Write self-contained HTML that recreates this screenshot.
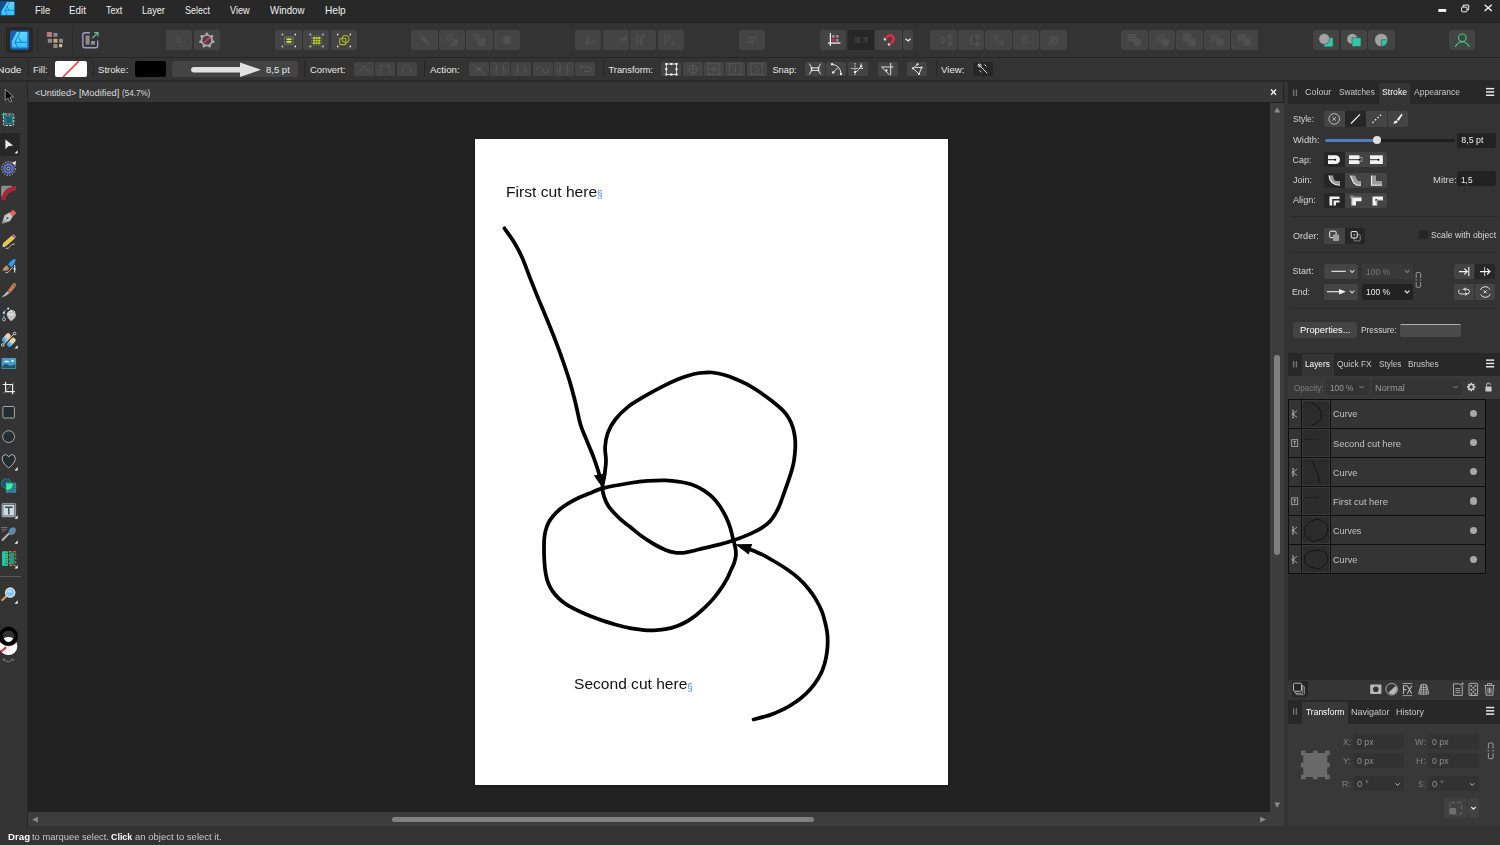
<!DOCTYPE html>
<html lang="en"><head><meta charset="utf-8"><title>Affinity Designer</title>
<style>
html,body{margin:0;padding:0;}
body{width:1500px;height:845px;overflow:hidden;background:#222222;position:relative;
 font-family:"Liberation Sans",sans-serif;}
.t{position:absolute;white-space:nowrap;transform-origin:0 50%;}
.b{position:absolute;border-radius:2px;background:#444444;}
.b.off{background:#444444;}
.b.on{background:#262626;}
svg{position:absolute;left:0;top:0;overflow:visible;}
</style></head>
<body>
<div id="document">
<div style="position:absolute;left:28.20px;top:82.00px;width:1254.80px;height:20.00px;background:#363636;"></div>
<span class="t" style="left:35.15px;top:86.00px;font-size:8.9px;line-height:14px;color:#dcdcdc;transform:scaleX(1.0179);">&lt;Untitled&gt;</span>
<span class="t" style="left:78.85px;top:86.00px;font-size:8.9px;line-height:14px;color:#dcdcdc;transform:scaleX(1.0474);">[Modified]</span>
<span class="t" style="left:122.21px;top:86.00px;font-size:8.9px;line-height:14px;color:#dcdcdc;transform:scaleX(0.9101);">(54.7%)</span>
<div style="position:absolute;left:1269.80px;top:102.50px;width:14.20px;height:723.50px;background:#3d3d3d;"></div>
<div style="position:absolute;left:28.00px;top:812.00px;width:1256.00px;height:14.00px;background:#3d3d3d;"></div>
<div style="position:absolute;left:1274.00px;top:354.80px;width:6.10px;height:200.20px;background:#808080;border-radius:3px;"></div>
<div style="position:absolute;left:392.00px;top:816.50px;width:422.00px;height:5.70px;background:#808080;border-radius:3px;"></div>
<div style="position:absolute;left:1284.00px;top:82.00px;width:4.00px;height:744.00px;background:#333333;"></div>
<div class="artboard" style="position:absolute;left:475.00px;top:139.00px;width:473.00px;height:645.50px;background:#ffffff;box-shadow:0 0 2px 0.5px rgba(0,0,0,0.35);"></div>
<span class="t" style="left:505.75px;top:181.70px;font-size:15.3px;line-height:20px;color:#111;transform:scaleX(1.0212);will-change:transform;">First cut here</span>
<span class="t" style="left:573.50px;top:674.20px;font-size:15.3px;line-height:20px;color:#111;transform:scaleX(1.0174);will-change:transform;">Second cut here</span>
<span class="t" style="left:596.53px;top:189.10px;font-size:10px;line-height:12px;color:#4f93e6;transform:scaleX(1.0335);will-change:transform;">§</span>
<span class="t" style="left:686.53px;top:681.60px;font-size:10px;line-height:12px;color:#4f93e6;transform:scaleX(1.0335);will-change:transform;">§</span>
<svg width="1500" height="845" viewBox="0 0 1500 845">
<g fill="none" stroke="#000" stroke-width="3.75" stroke-linecap="round" stroke-linejoin="round">
<path d="M602.4,488.4C609.2,486.6 622.4,484.2 630.0,483.0C637.6,481.8 641.9,481.3 647.8,480.9C653.7,480.5 660.2,480.2 665.5,480.4C670.8,480.5 675.3,481.1 679.7,481.8C684.1,482.5 687.8,483.0 691.8,484.4C695.8,485.8 700.2,488.1 703.7,490.3C707.2,492.6 710.4,495.1 713.1,497.9C715.9,500.6 718.0,503.6 720.2,506.8C722.4,510.1 724.5,513.9 726.2,517.4C727.9,520.9 729.2,524.5 730.3,528.0C731.4,531.5 732.1,535.2 733.0,538.6C733.9,542.0 734.9,545.3 735.4,548.1C735.9,550.9 736.1,552.8 735.9,555.2C735.7,557.7 735.1,560.2 734.2,562.8C733.3,565.4 731.8,568.1 730.6,570.8C729.4,573.5 728.6,576.0 727.0,578.9C725.4,581.8 723.3,585.2 721.1,588.4C718.9,591.6 716.6,594.8 714.0,597.9C711.4,601.0 708.7,603.9 705.7,606.7C702.8,609.6 699.4,612.5 696.3,615.0C693.1,617.5 690.0,619.7 686.8,621.5C683.6,623.3 680.8,624.7 677.3,626.0C673.8,627.3 669.4,628.5 665.5,629.2C661.6,629.9 657.7,630.3 653.7,630.4C649.8,630.5 645.8,630.2 641.8,629.8C637.8,629.4 634.4,629.1 630.0,628.2C625.6,627.3 619.6,625.7 615.2,624.5C610.8,623.3 607.4,622.2 603.4,620.9C599.4,619.6 595.5,618.2 591.5,616.6C587.5,615.0 583.4,613.2 579.7,611.5C576.0,609.8 572.2,608.0 569.1,606.2C566.0,604.4 563.8,602.8 561.4,600.8C559.0,598.8 556.8,596.6 554.9,594.3C553.0,592.0 551.4,589.8 550.1,587.2C548.8,584.6 547.7,581.9 546.9,578.9C546.1,575.9 545.5,572.6 545.1,569.5C544.7,566.4 544.5,563.4 544.3,560.0C544.1,556.6 544.0,552.6 544.0,549.2C544.0,545.8 544.0,542.7 544.2,539.7C544.4,536.7 544.7,534.2 545.4,531.4C546.1,528.6 547.0,525.7 548.3,523.1C549.6,520.5 551.2,518.3 553.1,516.0C555.0,513.7 557.1,511.6 559.6,509.5C562.1,507.4 565.0,505.4 567.9,503.6C570.8,501.8 573.8,500.2 577.3,498.5C580.8,496.8 585.0,495.3 589.2,493.6C593.4,491.9 595.6,490.2 602.4,488.4Z"/>
<path d="M602.4,487.3C602.5,483.7 603.9,479.3 604.5,474.9C605.1,470.5 605.9,465.6 606.0,461.0C606.1,456.4 604.8,451.7 605.1,447.0C605.4,442.3 606.1,437.4 607.8,432.8C609.5,428.2 612.0,423.8 615.3,419.5C618.6,415.2 622.9,411.0 627.7,407.1C632.5,403.2 638.8,399.7 644.3,396.4C649.8,393.1 655.3,390.1 660.8,387.3C666.3,384.5 672.6,381.6 677.4,379.6C682.2,377.6 685.7,376.3 689.5,375.2C693.3,374.1 696.3,373.4 700.0,373.0C703.7,372.6 707.8,372.2 711.8,372.5C715.8,372.8 719.8,373.7 723.7,374.8C727.7,375.9 731.6,377.3 735.5,378.9C739.4,380.5 743.3,382.2 747.3,384.4C751.2,386.5 755.2,389.1 759.2,391.8C763.2,394.5 767.1,397.2 771.0,400.3C774.9,403.4 779.8,407.4 782.8,410.4C785.8,413.4 787.1,415.2 788.8,418.1C790.5,421.0 791.9,424.2 792.9,427.5C793.9,430.8 794.6,434.8 795.0,438.1C795.4,441.5 795.4,444.0 795.3,447.6C795.1,451.2 794.6,456.6 794.1,460.0C793.6,463.4 793.3,464.6 792.4,468.0C791.5,471.4 790.0,476.0 788.6,480.2C787.2,484.4 785.5,488.9 783.9,493.3C782.3,497.7 780.8,502.6 779.2,506.3C777.6,510.0 776.1,512.6 774.5,515.2C772.9,517.8 771.9,519.5 769.7,521.7C767.5,523.9 764.5,526.2 761.4,528.2C758.2,530.2 755.4,531.6 750.8,533.6C746.2,535.6 739.1,538.5 733.8,540.3C728.5,542.1 724.1,543.3 719.1,544.6C714.1,545.9 708.6,546.9 703.7,548.1C698.9,549.3 693.4,550.8 690.0,551.6C686.6,552.4 685.8,552.6 683.3,552.8C680.8,553.0 678.0,553.1 675.0,552.6C672.0,552.1 669.0,551.3 665.5,549.9C662.0,548.5 657.7,546.3 653.7,544.0C649.8,541.7 645.8,539.2 641.8,536.3C637.8,533.4 633.7,529.8 630.0,526.8C626.3,523.8 623.4,522.0 619.8,518.6C616.2,515.2 611.2,510.0 608.6,506.3C606.0,502.6 605.0,499.6 604.0,496.4C603.0,493.2 602.3,490.9 602.4,487.3Z"/>
<path d="M504.4,228.3C506.0,230.6 511.2,237.5 514.1,242.3C517.0,247.1 519.4,251.5 522.0,257.3C524.6,263.1 527.0,270.3 529.7,277.1C532.4,283.9 535.2,291.1 538.0,297.9C540.8,304.7 543.5,310.9 546.3,317.7C549.1,324.4 551.8,331.1 554.6,338.4C557.4,345.7 560.6,354.3 563.1,361.5C565.6,368.7 567.6,374.5 569.7,381.4C571.8,388.3 573.7,395.8 575.5,403.0C577.3,410.2 578.7,418.4 580.5,424.5C582.3,430.6 584.1,433.9 586.3,439.4C588.5,444.9 591.6,452.1 593.7,457.6C595.8,463.1 597.7,469.5 598.7,472.6C599.7,475.8 599.5,475.9 599.6,476.5"/>
<path d="M753.6,719.5C756.3,718.8 764.6,716.8 769.6,715.1C774.6,713.4 779.5,711.4 783.8,709.2C788.1,707.0 791.9,704.8 795.6,702.1C799.4,699.5 803.1,696.3 806.3,693.3C809.5,690.2 812.2,687.0 814.6,683.8C817.0,680.6 818.8,677.6 820.5,674.3C822.2,670.9 823.5,667.5 824.6,663.7C825.7,660.0 826.5,655.6 827.0,651.8C827.5,648.0 827.7,644.3 827.7,641.0C827.7,637.7 827.5,635.0 827.1,632.0C826.7,629.0 826.1,626.2 825.2,622.7C824.3,619.2 823.3,614.8 821.7,610.9C820.1,607.0 817.9,602.8 815.7,599.1C813.5,595.5 811.4,592.4 808.6,589.0C805.9,585.6 802.8,582.1 799.2,578.9C795.7,575.6 791.8,572.6 787.3,569.5C782.8,566.4 776.1,562.4 772.0,560.0C767.9,557.6 766.4,556.7 762.8,554.9C759.2,553.1 752.9,550.5 750.3,549.4C747.7,548.3 747.5,548.4 747.0,548.2"/>
</g>
<polygon points="602.9,488.4 593.9,475.5 606.6,472.9" fill="#000"/>
<polygon points="735.1,544.3 752.2,544.1 748.7,554.4" fill="#000"/>
<circle cx="538.5" cy="194" r="0.6" fill="#6aa5ea"/>
<circle cx="563.5" cy="194" r="0.6" fill="#6aa5ea"/>
<circle cx="628.7" cy="686.6" r="0.6" fill="#6aa5ea"/>
<circle cx="653.2" cy="686.6" r="0.6" fill="#6aa5ea"/>
<g fill="#8c8c8c"><polygon points="1274.3,112.6 1280.2,112.6 1277.2,107.2"/><polygon points="1274.3,802.4 1280.2,802.4 1277.2,807.8"/><polygon points="1260.2,816.8 1260.2,822.4 1265.8,819.6"/><polygon points="37.8,816.8 37.8,822.4 32.2,819.6"/></g>
<path d="M1271,89.5l5,5.3M1276,89.5l-5,5.3" stroke="#f0f0f0" stroke-width="1.3" fill="none"/>
</svg>
</div>
<div id="menubar">
<div style="position:absolute;left:0.00px;top:0.00px;width:1500.00px;height:22.00px;background:#282828;"></div>
<div style="position:absolute;left:0.00px;top:22.00px;width:1500.00px;height:1.00px;background:#252525;"></div>
<span class="t" style="left:34.75px;top:4.00px;font-size:10.4px;line-height:14px;color:#f0f0f0;transform:scaleX(0.9070);">File</span>
<span class="t" style="left:69.22px;top:4.00px;font-size:10.4px;line-height:14px;color:#f0f0f0;transform:scaleX(0.9418);">Edit</span>
<span class="t" style="left:105.82px;top:4.00px;font-size:10.4px;line-height:14px;color:#f0f0f0;transform:scaleX(0.8528);">Text</span>
<span class="t" style="left:142.27px;top:4.00px;font-size:10.4px;line-height:14px;color:#f0f0f0;transform:scaleX(0.8801);">Layer</span>
<span class="t" style="left:185.10px;top:4.00px;font-size:10.4px;line-height:14px;color:#f0f0f0;transform:scaleX(0.8650);">Select</span>
<span class="t" style="left:230.45px;top:4.00px;font-size:10.4px;line-height:14px;color:#f0f0f0;transform:scaleX(0.8746);">View</span>
<span class="t" style="left:270.45px;top:4.00px;font-size:10.4px;line-height:14px;color:#f0f0f0;transform:scaleX(0.9337);">Window</span>
<span class="t" style="left:324.69px;top:4.00px;font-size:10.4px;line-height:14px;color:#f0f0f0;transform:scaleX(0.9697);">Help</span>
<svg width="1500" height="845" viewBox="0 0 1500 845"><defs><linearGradient id="lgm" x1="0" y1="0" x2="0" y2="1"><stop offset="0" stop-color="#5ed9fb"/><stop offset="1" stop-color="#36c2fd"/></linearGradient></defs><rect x="-1" y="0.95" width="16.1" height="15.15" rx="1.7" fill="#154f8e"/><polygon points="7.1,2.1 14.2,2.1 14.2,14.9 1.3,14.9 1.3,11.4" fill="url(#lgm)"/><path d="M9.6,2.1 L5,10.4 L7.2,14.9 M5,10.4 H14.2 M6.9,6.5 L9.2,10.4" stroke="#1b74c8" stroke-width="0.75" fill="none" stroke-linejoin="round"/><rect x="1438.3" y="9" width="7.9" height="2.9" fill="#f4f4f4"/><g fill="none" stroke="#f0f0f0" stroke-width="1"><path d="M1463.3,7 v-1.9 h5.4 v4.6 h-1.8"/><rect x="1461.6" y="7.1" width="5.4" height="4.7" rx="0.8"/></g><path d="M1484.6,4.8 l7.2,6.2 M1491.8,4.8 l-7.2,6.2" stroke="#f4f4f4" stroke-width="1.3" fill="none"/></svg>
</div>
<div id="toolbar">
<div style="position:absolute;left:0.00px;top:23.00px;width:1500.00px;height:34.00px;background:#333333;"></div>
<div style="position:absolute;left:0.00px;top:57.00px;width:1500.00px;height:1.00px;background:#272727;"></div>
<div style="position:absolute;left:6.40px;top:27.00px;width:26.30px;height:26.00px;background:#272727;border-radius:2.5px;"></div>
<div style="position:absolute;left:37.00px;top:27.00px;width:1.00px;height:26.00px;background:#2a2a2a;"></div>
<div style="position:absolute;left:72.00px;top:27.00px;width:1.00px;height:26.00px;background:#2a2a2a;"></div>
<div class="b off" style="left:166.2px;top:30px;width:26.3px;height:20.3px"></div>
<div class="b " style="left:193.8px;top:30px;width:26.3px;height:20.3px"></div>
<div class="b " style="left:275.3px;top:30px;width:26.3px;height:20.3px"></div>
<div class="b " style="left:303.0px;top:30px;width:26.3px;height:20.3px"></div>
<div class="b " style="left:330.5px;top:30px;width:26.3px;height:20.3px"></div>
<div class="b off" style="left:411.3px;top:30px;width:26.3px;height:20.3px"></div>
<div class="b off" style="left:439.2px;top:30px;width:26.3px;height:20.3px"></div>
<div class="b off" style="left:466.3px;top:30px;width:26.3px;height:20.3px"></div>
<div class="b off" style="left:494.2px;top:30px;width:26.3px;height:20.3px"></div>
<div class="b off" style="left:575.0px;top:30px;width:26.3px;height:20.3px"></div>
<div class="b off" style="left:602.5px;top:30px;width:26.3px;height:20.3px"></div>
<div class="b off" style="left:630.0px;top:30px;width:26.3px;height:20.3px"></div>
<div class="b off" style="left:657.5px;top:30px;width:26.3px;height:20.3px"></div>
<div class="b off" style="left:739.2px;top:30px;width:26.3px;height:20.3px"></div>
<div class="b " style="left:820.0px;top:30px;width:26.3px;height:20.3px"></div>
<div class="b on" style="left:847.8px;top:30px;width:26.3px;height:20.3px"></div>
<div class="b " style="left:875.3px;top:30px;width:26.3px;height:20.3px"></div>
<div class="b" style="left:903px;top:30px;width:10px;height:20.3px"></div>
<div class="b off" style="left:930.3px;top:30px;width:26.3px;height:20.3px"></div>
<div class="b off" style="left:958.0px;top:30px;width:26.3px;height:20.3px"></div>
<div class="b off" style="left:985.3px;top:30px;width:26.3px;height:20.3px"></div>
<div class="b off" style="left:1013.0px;top:30px;width:26.3px;height:20.3px"></div>
<div class="b off" style="left:1040.3px;top:30px;width:26.3px;height:20.3px"></div>
<div class="b off" style="left:1121.3px;top:30px;width:26.3px;height:20.3px"></div>
<div class="b off" style="left:1149.2px;top:30px;width:26.3px;height:20.3px"></div>
<div class="b off" style="left:1176.3px;top:30px;width:26.3px;height:20.3px"></div>
<div class="b off" style="left:1204.2px;top:30px;width:26.3px;height:20.3px"></div>
<div class="b off" style="left:1231.3px;top:30px;width:26.3px;height:20.3px"></div>
<div class="b " style="left:1313.0px;top:30px;width:26.3px;height:20.3px"></div>
<div class="b " style="left:1340.8px;top:30px;width:26.3px;height:20.3px"></div>
<div class="b " style="left:1368.3px;top:30px;width:26.3px;height:20.3px"></div>
<div class="b " style="left:1449.2px;top:30px;width:26.3px;height:20.3px"></div>
<svg width="1500" height="845" viewBox="0 0 1500 845"><defs><linearGradient id="lgt" x1="0" y1="0" x2="0" y2="1"><stop offset="0" stop-color="#5ed9fb"/><stop offset="1" stop-color="#36c2fd"/></linearGradient></defs><rect x="10.10" y="30.60" width="19.10" height="19.10" rx="2.20" fill="#1a62b1"/><polygon points="16.59,31.99 27.29,31.99 27.29,47.60 11.90,47.60 11.90,41.20" fill="url(#lgt)"/><path d="M20.20,31.99 L14.89,42.19 L17.61,47.60 M14.89,42.29 L27.29,42.29 M18.60,37.29 L21.60,42.19" stroke="#1b78cf" stroke-width="0.96" fill="none" stroke-linejoin="round"/><rect x="46.8" y="32" width="5.2" height="4.9" rx="0.5" fill="#b07a82"/><rect x="53.4" y="33" width="4.1" height="3.7" rx="0.5" fill="#8c8c8c"/><rect x="47.8" y="38.8" width="4.2" height="3.9" rx="0.5" fill="#8c8c8c"/><rect x="53.4" y="38.8" width="4.1" height="3.9" rx="0.5" fill="#c9a27a"/><rect x="59" y="38.8" width="4.0" height="3.9" rx="0.5" fill="#8c8c8c"/><rect x="53.4" y="44" width="4.1" height="3.9" rx="0.5" fill="#8c8c8c"/><rect x="59" y="44" width="3.2" height="3.2" rx="0.5" fill="#d6c083"/><path d="M90,32.8 h-5 a2.2,2.2 0 0 0 -2.2,2.2 v10.5 a2.2,2.2 0 0 0 2.2,2.2 h10.5 a2.2,2.2 0 0 0 2.2,-2.2 v-5" fill="none" stroke="#9c9cca" stroke-width="1.4"/><rect x="85.6" y="35.5" width="4" height="9.2" fill="#8c8c8c"/><rect x="91" y="41" width="4" height="3.7" fill="#8c8c8c"/><path d="M92.3,38.3 L97.6,33 M94,32.6 h4 v4" fill="none" stroke="#6dab9b" stroke-width="1.3"/><circle cx="179.2" cy="40.3" r="2.3" fill="none" stroke="#515151" stroke-width="1.3"/><circle cx="179.2" cy="40.3" r="5.8" fill="none" stroke="#4a4a4a" stroke-width="1.4" stroke-dasharray="2.2 2.35"/><circle cx="206.8" cy="40.3" r="5.3" fill="none" stroke="#b0b0b0" stroke-width="1.6"/><circle cx="206.80" cy="33.70" r="1.25" fill="#b0b0b0"/><circle cx="211.96" cy="36.18" r="1.25" fill="#b0b0b0"/><circle cx="213.23" cy="41.77" r="1.25" fill="#b0b0b0"/><circle cx="209.66" cy="46.25" r="1.25" fill="#b0b0b0"/><circle cx="203.94" cy="46.25" r="1.25" fill="#b0b0b0"/><circle cx="200.37" cy="41.77" r="1.25" fill="#b0b0b0"/><circle cx="201.64" cy="36.18" r="1.25" fill="#b0b0b0"/><path d="M204.3,42.6 L209.3,37.9" stroke="#e5304a" stroke-width="1.9" stroke-linecap="round"/><g fill="#f2f2f2"><path d="M281.7,33.7 h1.7 v0.9 h-0.8 v0.8 h-0.9 z"/><path d="M281.7,47.3 h1.7 v-0.9 h-0.8 v-0.8 h-0.9 z"/><path d="M296.0,33.7 h-1.7 v0.9 h0.8 v0.8 h0.9 z"/><path d="M296.0,47.3 h-1.7 v-0.9 h0.8 v-0.8 h0.9 z"/></g><rect x="284.1" y="36.3" width="1" height="1.4" fill="#8f8f8f"/><rect x="284.1" y="38.4" width="1" height="1.4" fill="#8f8f8f"/><rect x="284.1" y="41.1" width="1" height="1.4" fill="#8f8f8f"/><rect x="284.1" y="43.4" width="1" height="1.4" fill="#8f8f8f"/><rect x="286.2" y="36.3" width="1" height="1.4" fill="#8f8f8f"/><rect x="286.2" y="38.4" width="1" height="1.4" fill="#8f8f8f"/><rect x="286.2" y="41.1" width="1" height="1.4" fill="#8f8f8f"/><rect x="286.2" y="43.4" width="1" height="1.4" fill="#8f8f8f"/><rect x="288.3" y="36.3" width="1" height="1.4" fill="#8f8f8f"/><rect x="288.3" y="38.4" width="1" height="1.4" fill="#8f8f8f"/><rect x="288.3" y="41.1" width="1" height="1.4" fill="#8f8f8f"/><rect x="288.3" y="43.4" width="1" height="1.4" fill="#8f8f8f"/><rect x="290.4" y="36.3" width="1" height="1.4" fill="#8f8f8f"/><rect x="290.4" y="38.4" width="1" height="1.4" fill="#8f8f8f"/><rect x="290.4" y="41.1" width="1" height="1.4" fill="#8f8f8f"/><rect x="290.4" y="43.4" width="1" height="1.4" fill="#8f8f8f"/><rect x="292.5" y="36.3" width="1" height="1.4" fill="#8f8f8f"/><rect x="292.5" y="38.4" width="1" height="1.4" fill="#8f8f8f"/><rect x="292.5" y="41.1" width="1" height="1.4" fill="#8f8f8f"/><rect x="292.5" y="43.4" width="1" height="1.4" fill="#8f8f8f"/><rect x="286.8" y="38.5" width="4.4" height="1.7" fill="#d7f01c"/><rect x="286.8" y="41" width="4.4" height="1.7" fill="#d7f01c"/><g fill="#f2f2f2"><path d="M309.6,33.7 h1.7 v0.9 h-0.8 v0.8 h-0.9 z"/><path d="M309.6,47.3 h1.7 v-0.9 h-0.8 v-0.8 h-0.9 z"/><path d="M323.6,33.7 h-1.7 v0.9 h0.8 v0.8 h0.9 z"/><path d="M323.6,47.3 h-1.7 v-0.9 h0.8 v-0.8 h0.9 z"/></g><rect x="311.5" y="35.8" width="10" height="9.6" fill="none" stroke="#8a8a8a" stroke-width="0.6" stroke-dasharray="1.4 1"/><rect x="312.8" y="37.0" width="2.1" height="2" fill="#c5dc22"/><rect x="312.8" y="39.6" width="2.1" height="2" fill="#c5dc22"/><rect x="312.8" y="42.2" width="2.1" height="2" fill="#c5dc22"/><rect x="315.5" y="37.0" width="2.1" height="2" fill="#c5dc22"/><rect x="315.5" y="39.6" width="2.1" height="2" fill="#c5dc22"/><rect x="315.5" y="42.2" width="2.1" height="2" fill="#c5dc22"/><rect x="318.2" y="37.0" width="2.1" height="2" fill="#c5dc22"/><rect x="318.2" y="39.6" width="2.1" height="2" fill="#c5dc22"/><rect x="318.2" y="42.2" width="2.1" height="2" fill="#c5dc22"/><g fill="#f2f2f2"><path d="M337.1,33.7 h1.7 v0.9 h-0.8 v0.8 h-0.9 z"/><path d="M337.1,47.3 h1.7 v-0.9 h-0.8 v-0.8 h-0.9 z"/><path d="M351.0,33.7 h-1.7 v0.9 h0.8 v0.8 h0.9 z"/><path d="M351.0,47.3 h-1.7 v-0.9 h0.8 v-0.8 h0.9 z"/></g><rect x="339.7" y="38.2" width="6.2" height="6.4" rx="1" fill="none" stroke="#a9ba22" stroke-width="1.1"/><circle cx="345.6" cy="38.9" r="3.4" fill="none" stroke="#a9ba22" stroke-width="1.1"/><g fill="#4f4f4f"><rect x="421" y="36" width="4" height="4"/><rect x="418.5" y="33" width="3.5" height="3.5" fill="#4a4a4a"/><rect x="426" y="41.5" width="3.5" height="3.5" fill="#4a4a4a"/><rect x="423.5" y="38.5" width="4" height="4" fill="#525252"/><rect x="446" y="33.5" width="7.5" height="7.5" fill="#4a4a4a"/><path d="M454.5,38.5 h3.3 v7.5 h-7.5 v-3.3 h4.2 z"/><rect x="473.5" y="33.5" width="7" height="7" fill="#4a4a4a"/><rect x="477.5" y="38" width="8.2" height="8" fill="#4f4f4f"/><rect x="503.5" y="36" width="7.5" height="8" fill="#4f4f4f"/></g><g fill="#4f4f4f"><polygon points="585,45 589,33 589,45"/><polygon points="590.5,45 590.5,35 594.5,45" fill="#4a4a4a"/><polygon points="617,40 627,35.5 627,40"/><polygon points="618,41.5 627,41.5 627,45" fill="#4a4a4a"/><rect x="636" y="33.5" width="2.6" height="12" fill="#4a4a4a"/><rect x="640" y="37" width="2.6" height="8.5"/><rect x="664" y="33.5" width="2.6" height="12" fill="#4a4a4a"/><rect x="667.5" y="33.5" width="2.6" height="8.5" fill="#4a4a4a"/><rect x="748" y="36.5" width="9" height="2.2"/><rect x="748" y="40.8" width="6" height="2.2"/></g><path d="M641.5,35.5 h2.4 v2.4 M670.5,44 h3.3 v-2.8" fill="none" stroke="#5a5a5a" stroke-width="0.9"/><rect x="828" y="42.2" width="12.4" height="1.8" fill="#bdbdbd"/><rect x="829.8" y="32.9" width="1.2" height="13" fill="#f4f4f4"/><rect x="832" y="35" width="2.7" height="2.7" fill="#8e8e8e"/><rect x="835.9" y="35" width="2.7" height="2.7" fill="#8e8e8e"/><rect x="835.9" y="38.9" width="2.7" height="2.7" fill="#8e8e8e"/><rect x="831.7" y="38.7" width="3.1" height="3.1" fill="#ea203b"/><rect x="854.7" y="37" width="5.8" height="5.8" fill="#393939"/><rect x="862" y="37" width="5.8" height="5.8" fill="#393939"/><polygon points="862,37.6 865.6,39.9 862,42.2" fill="#262626"/><path d="M885.6,38.6 L886.9,37 A3.7,3.7 0 1 1 892.3,41.9 L889.7,44" fill="none" stroke="#e6283d" stroke-width="2.5"/><path d="M884.2,40 L885.5,38.7 M888.2,45.1 L889.6,44" fill="none" stroke="#e0e0e0" stroke-width="2.5"/><path d="M905.6,38.7 l2.5,2.3 l2.5,-2.3" fill="none" stroke="#f0f0f0" stroke-width="1.2"/><g fill="#4f4f4f"><circle cx="950" cy="37" r="2.6"/><circle cx="950" cy="43.5" r="2.6"/><circle cx="977.5" cy="36.5" r="2.6"/><circle cx="977.5" cy="44" r="2.6"/><circle cx="996" cy="37.5" r="3.2" fill="#4a4a4a"/><circle cx="1001.5" cy="43" r="3.2" fill="#4a4a4a"/><rect x="1022" y="34" width="6.5" height="11" rx="1" fill="#4a4a4a"/><circle cx="1053.5" cy="40.2" r="5.4" fill="#4a4a4a"/></g><path d="M940.5,37.5 h3.5 v5.5 h-3.5 M944,40.2 h3 M968.5,40.2 h3 v-4.5 h3 M971.5,40.2 v4.5 h3 M1047.5,45.8 L1059,34.5" fill="none" stroke="#575757" stroke-width="0.9"/><rect x="1127.8" y="34" width="8.5" height="7.5" fill="#4f4f4f"/><circle cx="1137.3" cy="42.3" r="4.1" fill="#505050"/><rect x="1155.7" y="34" width="8.5" height="7.5" fill="#4a4a4a"/><circle cx="1165.2" cy="42.3" r="4.1" fill="#505050"/><rect x="1182.8" y="34" width="8.5" height="7.5" fill="#4f4f4f"/><circle cx="1192.3" cy="42.3" r="4.1" fill="#505050"/><rect x="1210.7" y="34" width="8.5" height="7.5" fill="#4a4a4a"/><circle cx="1220.2" cy="42.3" r="4.1" fill="#505050"/><rect x="1237.8" y="34" width="8.5" height="7.5" fill="#4f4f4f"/><circle cx="1247.3" cy="42.3" r="4.1" fill="#505050"/><rect x="1324" y="37.7" width="8.8" height="8.8" rx="1" fill="#2ec8a6"/><circle cx="1324.2" cy="38.9" r="5.4" fill="#a2a2a2" stroke="#444" stroke-width="0.6"/><circle cx="1352.3" cy="38.9" r="5.2" fill="#a2a2a2"/><rect x="1352" y="37.7" width="9" height="8.8" rx="1" fill="#2ec8a6" stroke="#444" stroke-width="0.6"/><circle cx="1381.3" cy="40" r="6.3" fill="#a2a2a2"/><path d="M1381.3,39.8 H1387.6 A6.3,6.3 0 0 1 1381.3,46.3 Z" fill="#2ec8a6" stroke="#444" stroke-width="0.6"/><g fill="none" stroke="#3ecb7e" stroke-width="1.15"><circle cx="1462.3" cy="37.8" r="3.8"/><path d="M1455.3,46.9 Q1458,41.7 1462.3,41.7 Q1466.6,41.7 1469.4,46.9"/></g></svg>
</div>
<div id="context">
<div style="position:absolute;left:0.00px;top:58.00px;width:1500.00px;height:22.00px;background:#333333;"></div>
<div style="position:absolute;left:0.00px;top:80.20px;width:1500.00px;height:1.50px;background:#282828;"></div>
<span class="t" style="left:-3.12px;top:63.20px;font-size:9.3px;line-height:14px;color:#e8e8e8;transform:scaleX(1.1061);">Node</span>
<span class="t" style="left:33.25px;top:63.20px;font-size:9.3px;line-height:14px;color:#e8e8e8;transform:scaleX(1.0125);">Fill:</span>
<span class="t" style="left:97.57px;top:63.20px;font-size:9.3px;line-height:14px;color:#e8e8e8;transform:scaleX(1.0295);">Stroke:</span>
<span class="t" style="left:309.53px;top:63.20px;font-size:9.3px;line-height:14px;color:#e8e8e8;transform:scaleX(1.0060);">Convert:</span>
<span class="t" style="left:430.00px;top:63.20px;font-size:9.3px;line-height:14px;color:#e8e8e8;transform:scaleX(1.0448);">Action:</span>
<span class="t" style="left:608.51px;top:63.20px;font-size:9.3px;line-height:14px;color:#e8e8e8;">Transform:</span>
<span class="t" style="left:772.38px;top:63.20px;font-size:9.3px;line-height:14px;color:#e8e8e8;">Snap:</span>
<span class="t" style="left:940.75px;top:63.20px;font-size:9.3px;line-height:14px;color:#e8e8e8;transform:scaleX(1.0382);">View:</span>
<div style="position:absolute;left:28.00px;top:61.00px;width:1.00px;height:16.00px;background:#262626;"></div>
<div style="position:absolute;left:92.50px;top:61.00px;width:1.00px;height:16.00px;background:#262626;"></div>
<div style="position:absolute;left:303.50px;top:61.00px;width:1.00px;height:16.00px;background:#262626;"></div>
<div style="position:absolute;left:424.20px;top:61.00px;width:1.00px;height:16.00px;background:#262626;"></div>
<div style="position:absolute;left:602.80px;top:61.00px;width:1.00px;height:16.00px;background:#262626;"></div>
<div style="position:absolute;left:935.50px;top:61.00px;width:1.00px;height:16.00px;background:#262626;"></div>
<div style="position:absolute;left:55.00px;top:61.00px;width:31.50px;height:16.00px;background:#ffffff;border-radius:2px;"></div>
<div style="position:absolute;left:134.60px;top:61.20px;width:31.40px;height:15.60px;background:#000000;border-radius:2px;"></div>
<div style="position:absolute;left:172.20px;top:61.00px;width:125.60px;height:16.00px;background:#444444;border-radius:2px;"></div>
<span class="t" style="left:266.27px;top:63.20px;font-size:9.3px;line-height:14px;color:#e8e8e8;transform:scaleX(1.0227);">8,5 pt</span>
<div class="b off" style="left:353.8px;top:62px;width:20px;height:14.2px;border-radius:1.5px"></div>
<div class="b off" style="left:375.2px;top:62px;width:20px;height:14.2px;border-radius:1.5px"></div>
<div class="b off" style="left:396.6px;top:62px;width:20px;height:14.2px;border-radius:1.5px"></div>
<div class="b off" style="left:468.7px;top:62px;width:20px;height:14.2px;border-radius:1.5px"></div>
<div class="b off" style="left:490.0px;top:62px;width:20px;height:14.2px;border-radius:1.5px"></div>
<div class="b off" style="left:511.3px;top:62px;width:20px;height:14.2px;border-radius:1.5px"></div>
<div class="b off" style="left:532.6px;top:62px;width:20px;height:14.2px;border-radius:1.5px"></div>
<div class="b off" style="left:553.9px;top:62px;width:20px;height:14.2px;border-radius:1.5px"></div>
<div class="b off" style="left:575.2px;top:62px;width:20px;height:14.2px;border-radius:1.5px"></div>
<div class="b off" style="left:682.8px;top:62px;width:20px;height:14.2px;border-radius:1.5px"></div>
<div class="b off" style="left:704.1px;top:62px;width:20px;height:14.2px;border-radius:1.5px"></div>
<div class="b off" style="left:725.4px;top:62px;width:20px;height:14.2px;border-radius:1.5px"></div>
<div class="b off" style="left:746.7px;top:62px;width:20px;height:14.2px;border-radius:1.5px"></div>
<div class="b " style="left:661.4px;top:62px;width:20px;height:14.2px;border-radius:1.5px"></div>
<div class="b " style="left:805.0px;top:62px;width:20px;height:14.2px;border-radius:1.5px"></div>
<div class="b " style="left:826.4px;top:62px;width:20px;height:14.2px;border-radius:1.5px"></div>
<div class="b " style="left:847.8px;top:62px;width:20px;height:14.2px;border-radius:1.5px"></div>
<div class="b " style="left:877.6px;top:62px;width:20px;height:14.2px;border-radius:1.5px"></div>
<div class="b " style="left:907.4px;top:62px;width:20px;height:14.2px;border-radius:1.5px"></div>
<div class="b on" style="left:972.8px;top:62px;width:20px;height:14.2px;border-radius:1.5px"></div>
<svg width="1500" height="845" viewBox="0 0 1500 845"><path d="M63,77 L79,61" stroke="#ff1a1a" stroke-width="1.3"/><path d="M193.8,69.7 H243" stroke="#e0e0e0" stroke-width="5.4" stroke-linecap="round"/><polygon points="240,62.4 261,69.7 240,77" fill="#e0e0e0"/><g fill="none" stroke="#585858" stroke-width="0.9"><path d="M358.5,73 L364,65.6 L369.5,73"/><path d="M380.3,73 Q380.3,66.5 383,65.4 M389.7,73 Q389.7,66.5 387,65.4 M379.5,65.4 h3.5 M387,65.4 h3.5"/><path d="M402.2,73.3 Q402.5,65.6 406.6,65.6 Q410.7,65.6 411,73.3"/><path d="M473,64 l11.5,10.2 M484.500,64 l-11.5,10.200"/><circle cx="478.7" cy="69.1" r="1.5"/><path d="M496.200,64.500 v9.500 M503.800,64.500 v9.500 M494.500,69.2 h3.5 M502,69.2 h3.5"/><path d="M517.500,64.500 v9.500 M525.100,64.500 v9.500 M516,69.2 h3.5 M523.500,69.2 h3.5"/><path d="M536.5,69.7 Q539.5,62.500 542.500,69.5 Q545.500,76.500 548.600,69.300"/><path d="M560,64.500 v9.500 M567.600,64.500 v9.500 M558.300,69.2 h3.5 M565.800,69.2 h3.5"/><path d="M580,67 h9 a2,2 0 0 1 0,4.500 h-5.500 M582,65 l-2,2 l2,2"/><circle cx="692.800" cy="69.2" r="4"/><path d="M692.800,63.500 v11.500 M687,69.2 h11.500"/><path d="M708.400,63.500 v11.500 M719.700,63.500 v11.500 M707,63.800 h14 M707,74.600 h14"/><path d="M710.500,69.200 q3.600,-3.500 7.200,0 q-3.600,3.500 -7.200,0z"/><circle cx="714.1" cy="69.2" r="1"/><path d="M729.500,63.500 v11.500 M741,63.500 v11.500 M728.500,63.800 h14 M728.500,74.600 h14 M735.300,65.500 v7.500"/><path d="M751,63.500 v11.500 M762.300,63.500 v11.500 M750,63.800 h14 M750,74.600 h14"/><path d="M754.500,67.500 a2.600,2.600 0 1 1 2.200,4.100"/></g><rect x="666.3" y="64" width="10.200" height="10.5" fill="none" stroke="#f2f2f2" stroke-width="0.8"/><rect x="665.3" y="63.0" width="2" height="2" fill="#ffffff"/><rect x="665.3" y="68.2" width="2" height="2" fill="#ffffff"/><rect x="665.3" y="73.5" width="2" height="2" fill="#ffffff"/><rect x="670.4" y="63.0" width="2" height="2" fill="#ffffff"/><rect x="670.4" y="73.5" width="2" height="2" fill="#ffffff"/><rect x="675.5" y="63.0" width="2" height="2" fill="#ffffff"/><rect x="675.5" y="68.2" width="2" height="2" fill="#ffffff"/><rect x="675.5" y="73.5" width="2" height="2" fill="#ffffff"/><g fill="none" stroke="#f0f0f0" stroke-width="0.9"><path d="M809.3,63.600 Q813.500,69 809.3,74.300 M820.700,63.600 Q816.500,69 820.700,74.300 M811.600,67.900 h6.800 M811.600,70.400 h6.800"/><path d="M832,64.200 Q840.500,65.500 841,74 M833.300,72.300 L838,67.600"/><path d="M855,63 v12 M851,68.500 h12" stroke-dasharray="1.6 1"/><path d="M855,72 Q860.200,70.500 861.300,63.500"/><path d="M881.500,67 H893.300 M890.700,63 V75.300 M881.500,67 L889.500,74.800"/><path d="M913,68.300 L917.600,64.300 M913,68.300 L919,74 M921.600,67.500 L919,74 M915.200,67.500 H921.600"/><path d="M978.300,64.200 L987.300,73.300 M984.500,64.500 l2,2 M979.500,70.300 l2,2"/><circle cx="979.600" cy="65.500" r="1.5"/></g><g fill="#f0f0f0"><rect x="831" y="63.200" width="2" height="2"/><rect x="840" y="73" width="2" height="2"/><circle cx="833.200" cy="72.400" r="1.200"/><rect x="854" y="71" width="2" height="2"/><rect x="860.300" y="65.500" width="2" height="2"/><circle cx="886.500" cy="70.300" r="1.100"/><circle cx="913" cy="68.300" r="1.100"/><circle cx="917.600" cy="64.300" r="1.100"/><circle cx="919" cy="74" r="1.100"/><circle cx="921.600" cy="67.500" r="1"/><rect x="811" y="67.200" width="1.500" height="1.500"/><rect x="817.600" y="67.200" width="1.500" height="1.500"/><rect x="811" y="69.700" width="1.500" height="1.500"/><rect x="817.600" y="69.700" width="1.500" height="1.500"/></g></svg>
</div>
<div id="tools">
<div style="position:absolute;left:0.00px;top:81.60px;width:27.30px;height:744.40px;background:#343434;"></div>
<div style="position:absolute;left:27.30px;top:81.60px;width:0.90px;height:744.40px;background:#262626;"></div>
<div style="position:absolute;left:0.00px;top:132.50px;width:20.00px;height:23.00px;background:#262626;border-radius:2px;"></div>
<div style="position:absolute;left:0.00px;top:576.00px;width:21.00px;height:1.00px;background:#5a5a5a;"></div>
<svg width="1500" height="845" viewBox="0 0 1500 845"><path d="M5.2,89.2 V100.6 L7.9,98 L10,102 L11.9,101.100 L9.900,97.200 L13.600,96.900 Z" fill="#050505" stroke="#9a9a9a" stroke-width="0.9" stroke-linejoin="round"/><rect x="3.4" y="114" width="10.400" height="11.500" rx="1.5" fill="none" stroke="#e8e8e8" stroke-width="0.9" stroke-dasharray="2.4 1.1"/><rect x="5" y="115.800" width="7.300" height="8" rx="0.8" fill="#1f5a70" stroke="#2aa79b" stroke-width="1"/><path d="M3.5,112.600 v4 M1.500,114.600 h4" stroke="#2fd0aa" stroke-width="1"/><path d="M5.4,139.500 V149.200 L8.300,146.200 L13.200,145.600 Z" fill="#e6e6e6"/><polygon points="17.7,150.2 17.7,153.6 14.5,153.6" fill="#f4f4f4"/><circle cx="8.500" cy="168.500" r="4.200" fill="none" stroke="#5a6de0" stroke-width="2.500"/><circle cx="8.500" cy="168.500" r="6.800" fill="none" stroke="#e8e8e8" stroke-width="0.9" stroke-dasharray="1.3 1.5"/><circle cx="8.500" cy="168.500" r="1.600" fill="none" stroke="#e8e8e8" stroke-width="0.8"/><polygon points="12,162.700 16,161 15.400,165.600" fill="#f0f0f0"/><path d="M1.700,186.200 H11.800 Q3.800,188.500 1.700,196.300 Z" fill="#8e8e8e" stroke="#b8b8b8" stroke-width="0.5"/><path d="M3.200,199.900 Q4.500,189.800 16,188" fill="none" stroke="#b5273b" stroke-width="3.800"/><path d="M3.300,199.900 Q4.600,190 16,188.200" fill="none" stroke="#7a1826" stroke-width="0.5"/><path d="M2,223.600 L4.500,215.500 L9.400,212.600 L12.800,216.200 L10,221 Z" fill="#c9c9c9" stroke="#8a8a8a" stroke-width="0.5"/><path d="M2.400,223.200 L7.300,218.300" stroke="#555" stroke-width="0.7"/><circle cx="7.600" cy="218" r="0.9" fill="#444"/><rect x="-2.500" y="-2.300" width="5" height="4.600" rx="0.8" transform="translate(13,213) rotate(45)" fill="#f0604a"/><path d="M11.800,235.400 L15,238.300 L6,246.300 L3,243.200 Z" fill="#e6c84e"/><path d="M3,243.200 L6,246.300 L2.500,247.300 Z" fill="#f0e2b0"/><path d="M12.300,234.900 L13.600,233.900 L16.200,236.900 L15.300,237.900 Z" fill="#e265d2"/><path d="M5.800,248.400 Q8.500,249 10,246.500 Q11.500,243.800 14.800,244" fill="none" stroke="#e0e0e0" stroke-width="0.8"/><path d="M8.200,264.500 Q10.500,259.600 15.600,258.900 Q15.800,263 11.200,267.200 Z" fill="#2b9df3"/><path d="M2.400,270.200 Q4,266 7.300,265.400 Q9.600,267.200 8.800,269.500 Q6,271.800 2.400,270.200 Z" fill="#c58a6b"/><path d="M5.500,272.700 Q8.500,273 9.800,270.500 Q11,268 13,267.500" fill="none" stroke="#e0e0e0" stroke-width="0.8"/><path d="M14.700,265 v7.600 M13.400,269 h2.600" stroke="#f0f0f0" stroke-width="1"/><path d="M7.800,290.600 L13,283.600 Q15,282.300 16,284.300 Q16.400,285.800 15,287.300 L10.300,292.800 Z" fill="#c87a55"/><circle cx="14" cy="285.500" r="0.8" fill="#7a4a35"/><path d="M1.300,297.500 L7.600,291 L9.900,293 Q6,296.500 1.300,297.500 Z" fill="#b4b4b4"/><path d="M6.500,314.500 L11,309.500 L16.200,314.500 Q15.500,318.500 11,321.200 Q7.500,318.500 6.500,314.500 Z" fill="#c4c4c4"/><ellipse cx="11.300" cy="312.800" rx="3.800" ry="1.800" transform="rotate(-12 11.3 312.8)" fill="none" stroke="#f0f0f0" stroke-width="0.9"/><path d="M4,317.500 V312 L6.800,309.600" fill="none" stroke="#1c8fe0" stroke-width="1.500" stroke-dasharray="2 1"/><circle cx="4" cy="319.300" r="1.500" fill="none" stroke="#d0d0d0" stroke-width="0.8"/><circle cx="3.800" cy="312.700" r="1.100" fill="#e0e0e0"/><circle cx="8.200" cy="308.600" r="1.100" fill="#e0e0e0"/><defs><linearGradient id="gr1" x1="0" y1="0" x2="0" y2="1"><stop offset="0" stop-color="#f3d79b"/><stop offset="0.45" stop-color="#eed3a0"/><stop offset="0.6" stop-color="#7cc0e6"/><stop offset="1" stop-color="#2b9be2"/></linearGradient></defs><rect x="-2.400" y="-5.200" width="4.800" height="10.400" rx="2" transform="translate(6.300,337.800) rotate(42)" fill="url(#gr1)"/><rect x="-2.400" y="-5.200" width="4.800" height="10.400" rx="2" transform="translate(11.300,342.300) rotate(42)" fill="url(#gr1)"/><path d="M3.600,344.200 L13.800,334.200" stroke="#f0f0f0" stroke-width="0.9"/><circle cx="14.600" cy="333.500" r="1.300" fill="#333" stroke="#f0f0f0" stroke-width="0.8"/><circle cx="2.800" cy="344.900" r="1.300" fill="#333" stroke="#f0f0f0" stroke-width="0.8"/><polygon points="17.7,345.2 17.7,348.6 14.5,348.6" fill="#f4f4f4"/><rect x="1.600" y="358" width="14.500" height="11" rx="0.8" fill="#4a9bca"/><path d="M2.300,366.200 Q5.500,362.600 8.500,365.200 Q11.500,366.800 15.400,364 V368.300 H2.300 Z" fill="#1c5566"/><path d="M4.200,362.200 Q5,360 6.700,360.800 Q8.600,360.500 9.200,362.200 Z" fill="#f0f0f0"/><circle cx="12.500" cy="360.900" r="1.200" fill="#f4f4f4"/><path d="M5.600,381.800 V391.600 H14.800 M2.800,384.500 H12.600 V394.200" fill="none" stroke="#f0f0f0" stroke-width="1.200"/><path d="M3.200,393.500 L14,382.300" stroke="#a0a0a0" stroke-width="0.7"/><rect x="2.900" y="406.500" width="11.500" height="11.500" rx="1" fill="#242d30" stroke="#b4b4b4" stroke-width="0.9"/><circle cx="8.600" cy="436.600" r="5.900" fill="#242d30" stroke="#b4b4b4" stroke-width="0.9"/><path d="M8.700,468 Q2.200,463 2.200,458.300 Q2.300,454.700 5.500,454.600 Q7.700,454.700 8.700,457 Q9.700,454.700 12,454.600 Q15.200,454.700 15.300,458.300 Q15.300,463 8.700,468 Z" fill="#242d30" stroke="#c0c0c0" stroke-width="0.9"/><polygon points="17.7,467.0 17.7,470.4 14.5,470.4" fill="#f4f4f4"/><circle cx="6.300" cy="483.500" r="4.800" fill="#1d5665" stroke="#4aa0e0" stroke-width="0.9" stroke-dasharray="1.3 1.1"/><rect x="6.300" y="483" width="9.400" height="9.300" fill="#25808f" stroke="#6ab0ea" stroke-width="0.9" stroke-dasharray="1.3 1.3"/><path d="M6.300,483.400 H12.800 Q13,489.800 6.300,490 Z" fill="#3ef09a"/><rect x="1.900" y="503.400" width="13.800" height="13.500" rx="1" fill="#d6d6d6" stroke="#8fa0a6" stroke-width="0.6"/><rect x="2.900" y="504.400" width="11.800" height="11.500" fill="none" stroke="#2c5a6b" stroke-width="0.7"/><path d="M5,507.200 H12.600 M8.800,507.200 V514.400" stroke="#1f4c5e" stroke-width="1.400" fill="none"/><polygon points="17.7,515.3 17.7,518.7 14.5,518.7" fill="#f4f4f4"/><path d="M2.500,540 L8.800,533.600" stroke="#b8b8b8" stroke-width="2" stroke-linecap="round"/><path d="M8.600,532.300 Q9,528 13.200,527.300 Q16.200,528 15.800,531 Q15,535 10.500,535.200 Z" fill="#5b8aab"/><path d="M1,527.500 h6.500 M1.800,529.300 h5 M1.800,531 h3.200" stroke="#8a8a8a" stroke-width="0.7"/><polygon points="17.7,540.3 17.7,543.7 14.5,543.7" fill="#f4f4f4"/><rect x="2.100" y="551.300" width="5.900" height="14.500" rx="0.6" fill="#2fc9a1"/><path d="M4.700,553.500 h3 M5.500,556 h2.200 M4.700,558.500 h3 M5.500,561 h2.200 M4.700,563.500 h3" stroke="#14705a" stroke-width="0.8"/><rect x="9.600" y="552.600" width="4.800" height="12" fill="#1f9a82"/><rect x="9.300" y="551.600" width="6.400" height="14" fill="none" stroke="#e0702a" stroke-width="1.100" stroke-dasharray="2.400 1.600"/><polygon points="17.7,565.0 17.7,568.4 14.5,568.4" fill="#f4f4f4"/><path d="M2.300,600 L6.300,596.200" stroke="#d9a066" stroke-width="2.200" stroke-linecap="round"/><circle cx="10.200" cy="592.600" r="4.600" fill="#7cc7f7" stroke="#e8e8e8" stroke-width="1.300"/><ellipse cx="9.600" cy="591.300" rx="2" ry="1.400" fill="#b4e2ff"/><polygon points="17.7,600.3 17.7,603.7 14.5,603.7" fill="#f4f4f4"/><circle cx="8.400" cy="646.200" r="8.900" fill="#ffffff"/><path d="M1.200,651.500 L6.200,647.200" stroke="#ff1a1a" stroke-width="1.800"/><circle cx="8.500" cy="636.200" r="9.900" fill="#333333"/><circle cx="8.500" cy="636.200" r="7.700" fill="none" stroke="#000" stroke-width="3.800"/><circle cx="8.500" cy="636.200" r="9.700" fill="none" stroke="#2c2c2c" stroke-width="0.600"/><path d="M3.800,638.300 Q8.500,635.900 13.200,638.300 Q11.500,642 8.500,642 Q5.500,642 3.800,638.300 Z" fill="#ffffff"/><path d="M3.500,659 Q8.200,664.500 13,659 M3.200,660.800 l0.300,-1.800 l1.800,0.400 M13.300,660.800 l-0.300,-1.800 l-1.800,0.400" fill="none" stroke="#8a8a8a" stroke-width="0.8"/></svg>
</div>
<div id="panels">
<div id="stroke-panel">
<div style="position:absolute;left:1288.00px;top:82.00px;width:212.00px;height:271.00px;background:#333333;"></div>
<div style="position:absolute;left:1288.00px;top:81.50px;width:212.00px;height:22.70px;background:#282828;"></div>
<div style="position:absolute;left:1378.80px;top:83.00px;width:31.60px;height:21.20px;background:#353535;"></div>
<span class="t" style="left:1305.25px;top:85.40px;font-size:8.9px;line-height:14px;color:#c8c8c8;transform:scaleX(1.0051);">Colour</span>
<span class="t" style="left:1338.53px;top:85.40px;font-size:8.9px;line-height:14px;color:#c8c8c8;transform:scaleX(0.9294);">Swatches</span>
<span class="t" style="left:1381.61px;top:85.40px;font-size:8.9px;line-height:14px;color:#ffffff;transform:scaleX(0.9777);">Stroke</span>
<span class="t" style="left:1414.40px;top:85.40px;font-size:8.9px;line-height:14px;color:#c8c8c8;transform:scaleX(0.9611);">Appearance</span>
<span class="t" style="left:1292.62px;top:111.50px;font-size:8.9px;line-height:14px;color:#d6d6d6;transform:scaleX(0.9527);">Style:</span>
<span class="t" style="left:1292.95px;top:133.00px;font-size:8.9px;line-height:14px;color:#d6d6d6;transform:scaleX(1.0546);">Width:</span>
<span class="t" style="left:1292.55px;top:152.50px;font-size:8.9px;line-height:14px;color:#d6d6d6;">Cap:</span>
<span class="t" style="left:1292.86px;top:172.80px;font-size:8.9px;line-height:14px;color:#d6d6d6;transform:scaleX(1.0115);">Join:</span>
<span class="t" style="left:1293.00px;top:193.20px;font-size:8.9px;line-height:14px;color:#d6d6d6;transform:scaleX(1.0286);">Align:</span>
<span class="t" style="left:1292.59px;top:228.50px;font-size:8.9px;line-height:14px;color:#d6d6d6;transform:scaleX(1.0243);">Order:</span>
<span class="t" style="left:1292.60px;top:264.20px;font-size:8.9px;line-height:14px;color:#d6d6d6;">Start:</span>
<span class="t" style="left:1292.30px;top:284.60px;font-size:8.9px;line-height:14px;color:#d6d6d6;transform:scaleX(0.9861);">End:</span>
<span class="t" style="left:1432.84px;top:172.80px;font-size:8.9px;line-height:14px;color:#d6d6d6;transform:scaleX(1.0664);">Mitre:</span>
<span class="t" style="left:1431.31px;top:228.00px;font-size:8.9px;line-height:14px;color:#d6d6d6;transform:scaleX(0.9769);">Scale with object</span>
<div class="b " style="left:1324.0px;top:111.0px;width:20.5px;height:15.8px;border-radius:2px 0 0 2px;"></div>
<div class="b on" style="left:1345.1px;top:111.0px;width:20.5px;height:15.8px;border-radius:0;"></div>
<div class="b " style="left:1366.3px;top:111.0px;width:20.5px;height:15.8px;border-radius:0;"></div>
<div class="b " style="left:1387.5px;top:111.0px;width:20.5px;height:15.8px;border-radius:0 2px 2px 0;"></div>
<div class="b on" style="left:1324.0px;top:152.2px;width:20.5px;height:15.3px;border-radius:2px 0 0 2px;"></div>
<div class="b " style="left:1345.1px;top:152.2px;width:20.5px;height:15.3px;border-radius:0;"></div>
<div class="b " style="left:1366.3px;top:152.2px;width:20.5px;height:15.3px;border-radius:0 2px 2px 0;"></div>
<div class="b on" style="left:1324.0px;top:172.6px;width:20.5px;height:15.3px;border-radius:2px 0 0 2px;"></div>
<div class="b " style="left:1345.1px;top:172.6px;width:20.5px;height:15.3px;border-radius:0;"></div>
<div class="b " style="left:1366.3px;top:172.6px;width:20.5px;height:15.3px;border-radius:0 2px 2px 0;"></div>
<div class="b on" style="left:1324.0px;top:193.2px;width:20.5px;height:15.2px;border-radius:2px 0 0 2px;"></div>
<div class="b " style="left:1345.1px;top:193.2px;width:20.5px;height:15.2px;border-radius:0;"></div>
<div class="b " style="left:1366.3px;top:193.2px;width:20.5px;height:15.2px;border-radius:0 2px 2px 0;"></div>
<div class="b " style="left:1324.0px;top:228.2px;width:20.5px;height:15.5px;border-radius:2px 0 0 2px;"></div>
<div class="b on" style="left:1345.1px;top:228.2px;width:20.1px;height:15.5px;border-radius:0 2px 2px 0;"></div>
<div style="position:absolute;left:1325.00px;top:138.60px;width:129.60px;height:3.00px;background:#1f1f1f;border-radius:1.5px;"></div>
<div style="position:absolute;left:1325.00px;top:138.60px;width:52.00px;height:3.00px;background:#4f7cbc;border-radius:1.5px;"></div>
<div style="position:absolute;left:1372.60px;top:136.00px;width:8.20px;height:8.20px;background:#e0e0e0;border-radius:5px;"></div>
<div style="position:absolute;left:1457.00px;top:132.60px;width:39.30px;height:15.00px;background:#222222;border-radius:2px;"></div>
<span class="t" style="left:1461.30px;top:133.20px;font-size:8.9px;line-height:14px;color:#f0f0f0;">8,5 pt</span>
<div style="position:absolute;left:1457.00px;top:171.00px;width:39.30px;height:15.40px;background:#222222;border-radius:2px;"></div>
<span class="t" style="left:1461.07px;top:172.80px;font-size:8.9px;line-height:14px;color:#f0f0f0;transform:scaleX(0.9365);">1,5</span>
<div style="position:absolute;left:1291.00px;top:215.50px;width:206.00px;height:1.00px;background:#292929;"></div>
<div style="position:absolute;left:1291.00px;top:251.70px;width:206.00px;height:1.00px;background:#292929;"></div>
<div style="position:absolute;left:1291.00px;top:307.70px;width:206.00px;height:1.00px;background:#292929;"></div>
<div style="position:absolute;left:1418.60px;top:230.30px;width:9.40px;height:8.70px;background:#262626;border-radius:1.5px;"></div>
<div class="b " style="left:1324.0px;top:264.0px;width:34.0px;height:15.3px;"></div>
<div class="b " style="left:1324.0px;top:284.4px;width:34.0px;height:15.3px;"></div>
<div style="position:absolute;left:1362.00px;top:264.00px;width:51.00px;height:15.30px;background:#393939;border-radius:2px;"></div>
<div style="position:absolute;left:1362.00px;top:284.40px;width:51.00px;height:15.30px;background:#222222;border-radius:2px;"></div>
<span class="t" style="left:1366.06px;top:265.00px;font-size:8.9px;line-height:14px;color:#7a7a7a;transform:scaleX(0.9550);">100 %</span>
<span class="t" style="left:1366.06px;top:285.40px;font-size:8.9px;line-height:14px;color:#f0f0f0;transform:scaleX(0.9550);">100 %</span>
<div class="b " style="left:1454.3px;top:264.0px;width:20.1px;height:15.3px;border-radius:2px 0 0 2px;"></div>
<div class="b on" style="left:1475.1px;top:264.0px;width:20.2px;height:15.3px;border-radius:0 2px 2px 0;"></div>
<div class="b " style="left:1454.3px;top:284.4px;width:20.1px;height:15.3px;border-radius:2px 0 0 2px;"></div>
<div class="b " style="left:1475.1px;top:284.4px;width:20.2px;height:15.3px;border-radius:0 2px 2px 0;"></div>
<div class="b " style="left:1293.4px;top:322.2px;width:63.6px;height:15.8px;"></div>
<span class="t" style="left:1299.55px;top:323.40px;font-size:8.9px;line-height:14px;color:#ffffff;transform:scaleX(1.0575);">Properties...</span>
<span class="t" style="left:1361.03px;top:323.40px;font-size:8.9px;line-height:14px;color:#d6d6d6;transform:scaleX(0.9415);">Pressure:</span>
<div style="position:absolute;left:1400.00px;top:323.60px;width:61.40px;height:13.60px;background:#4a4a4a;border-radius:1.5px;border-top:1px solid #b0b0b0;box-sizing:border-box;"></div>
<svg width="1500" height="845" viewBox="0 0 1500 845"><rect x="1293.2" y="89.5" width="1" height="6.500" fill="#8c8c8c"/><rect x="1295.8" y="89.5" width="1" height="6.500" fill="#8c8c8c"/><rect x="1486" y="87.9" width="8.200" height="1.500" fill="#e6e6e6"/><rect x="1486" y="91.2" width="8.200" height="1.500" fill="#e6e6e6"/><rect x="1486" y="94.5" width="8.200" height="1.500" fill="#e6e6e6"/><circle cx="1334.200" cy="118.900" r="5.300" fill="none" stroke="#dcdcdc" stroke-width="0.8"/><path d="M1332.400,117.100 l3.600,3.600 M1336,117.100 l-3.600,3.600" stroke="#dcdcdc" stroke-width="0.8"/><path d="M1351,123.500 L1360,114.400" stroke="#f2f2f2" stroke-width="1.200"/><path d="M1372.500,122.700 L1381.200,114.500" stroke="#f2f2f2" stroke-width="1.300" stroke-dasharray="1.500 1.900"/><path d="M1393.300,123.800 Q1394,121 1396.200,120.200 L1397.900,121.700 Q1396.800,123.800 1393.300,123.800 Z M1396.900,119.400 L1401.200,114 Q1402.500,113.600 1402.300,115.200 L1398.600,120.900 Z" fill="#f2f2f2"/><path d="M1328,155.300 H1335.600 A4.350,4.350 0 0 1 1335.600,164 H1328 Z" fill="#f2f2f2"/><path d="M1328,159.650 H1335" stroke="#262626" stroke-width="1.100"/><circle cx="1335.200" cy="159.650" r="1" fill="#111"/><rect x="1349" y="155.300" width="10.500" height="8.700" fill="#f2f2f2"/><path d="M1349,159.650 H1359.500" stroke="#444" stroke-width="1.100"/><rect x="1359.600" y="157.600" width="2.400" height="3.600" fill="none" stroke="#bdbdbd" stroke-width="0.6"/><circle cx="1359.300" cy="159.650" r="0.9" fill="#111"/><rect x="1370" y="155.300" width="12.800" height="8.700" fill="#f2f2f2"/><path d="M1370,159.650 H1378.300" stroke="#444" stroke-width="1.100"/><circle cx="1378.500" cy="159.650" r="1" fill="#111"/><path d="M1329,175.500 Q1329.500,184.500 1340,185 V181 H1336 Q1333.500,180.500 1333.200,175.500 Z" fill="#9c9c9c"/><path d="M1329,175.500 Q1329.500,184.700 1340,185.200" fill="none" stroke="#f2f2f2" stroke-width="1.100"/><path d="M1350.500,175.500 L1354,182.500 L1357,185 H1361 V181 H1358 L1354.800,175.500 Z" fill="#9c9c9c"/><path d="M1350.300,175.500 L1353.600,182.800 L1356.800,185.200 H1361" fill="none" stroke="#f2f2f2" stroke-width="1.100"/><path d="M1371.500,175.500 V185 H1382 V181 H1376 V175.500 Z" fill="#9c9c9c"/><path d="M1371.500,175.500 V185.200 H1382" fill="none" stroke="#f2f2f2" stroke-width="1.100"/><path d="M1329.500,205.600 V196.400 H1339.500 V199 H1332.200 V205.600 Z M1333.600,205.600 V200.500 H1339.500 V202.600 H1336 V205.600 Z" fill="#f2f2f2"/><path d="M1351.500,205.600 V197.500 H1361.500 V201.200 H1356 V205.600 Z" fill="#f2f2f2"/><path d="M1350.700,195.900 h2.200 v2.200 h-2.200z" fill="none" stroke="#cfcfcf" stroke-width="0.6"/><path d="M1351.800,197 V205.600 M1351.800,197 H1361.500" stroke="#9c9c9c" stroke-width="0.8" fill="none"/><path d="M1372.500,205.600 V196.400 H1383 V200.200 H1377.200 V205.600 Z" fill="#f2f2f2"/><rect x="1375.400" y="199" width="2" height="2" fill="#333"/><path d="M1376.400,200 V205.600 M1376.400,200 H1383" stroke="#aaa" stroke-width="0.700" fill="none"/><rect x="1329.700" y="231.200" width="6.400" height="6.400" rx="1" fill="none" stroke="#f2f2f2" stroke-width="1"/><rect x="1333" y="234.600" width="6.200" height="6.400" rx="0.8" fill="#9c9c9c"/><rect x="1354.200" y="234.700" width="6" height="6.200" rx="0.8" fill="none" stroke="#8c8c8c" stroke-width="0.9"/><rect x="1351.200" y="231.600" width="6" height="6.300" rx="0.8" fill="#262626" stroke="#f2f2f2" stroke-width="1"/><rect x="1353.700" y="234.100" width="1.200" height="1.400" fill="#cfcfcf"/><path d="M1331.400,271.300 H1345.800" stroke="#f2f2f2" stroke-width="1.100"/><path d="M1349.8,270.2 l2.30,2.30 l2.30,-2.30" fill="none" stroke="#d0d0d0" stroke-width="1.1"/><path d="M1327,291.700 H1340" stroke="#f2f2f2" stroke-width="1.100"/><polygon points="1339,289 1346,291.700 1339,294.400" fill="#f2f2f2"/><path d="M1349.8,290.6 l2.30,2.30 l2.30,-2.30" fill="none" stroke="#d0d0d0" stroke-width="1.1"/><path d="M1404.8,270.1 l2.30,2.30 l2.30,-2.30" fill="none" stroke="#7c7c7c" stroke-width="1.1"/><path d="M1404.8,290.6 l2.30,2.30 l2.30,-2.30" fill="none" stroke="#f0f0f0" stroke-width="1.1"/><g fill="none" stroke="#b4b4b4" stroke-width="0.8"><path d="M1416.200,278 V273.500 a1,1 0 0 1 1,-1 h2.400 a1,1 0 0 1 1,1 V278 M1416.200,282 V286.300 a1,1 0 0 0 1,1 h2.400 a1,1 0 0 0 1,-1 V282 M1415.300,280 h1.800 M1419.700,280 h1.800"/></g><g fill="none" stroke="#f2f2f2" stroke-width="1.100"><path d="M1459,271.600 H1467.300 M1464.300,268.700 l3,2.900 l-3,2.900 M1468.800,267 V276.300"/><path d="M1480,271.600 H1490 M1487,268.700 l3,2.900 l-3,2.900"/><path d="M1484.600,267 V276.300" stroke-width="0.8"/><path d="M1462.500,289.200 H1467 a2.400,2.400 0 0 1 0,4.800 H1461 a2.400,2.400 0 0 1 -1.200,-4.500 M1465.800,287.800 l-1.800,1.500 l1.800,1.500 M1465.200,292.500 l1.800,1.500 l-1.800,1.500" stroke-width="0.9"/><path d="M1480.300,290 A5.300,5.300 0 0 1 1490,289.600 M1490.300,294 A5.300,5.300 0 0 1 1480.600,294.400 M1483.700,290.300 l3,3 M1486.700,290.300 l-3,3" stroke-width="0.9"/></g></svg>
</div>
<div id="layers-panel">
<div style="position:absolute;left:1288.00px;top:353.00px;width:212.00px;height:23.20px;background:#282828;"></div>
<div style="position:absolute;left:1302.00px;top:354.40px;width:32.00px;height:21.80px;background:#353535;"></div>
<span class="t" style="left:1305.04px;top:357.20px;font-size:8.9px;line-height:14px;color:#ffffff;transform:scaleX(0.9335);">Layers</span>
<span class="t" style="left:1336.72px;top:357.20px;font-size:8.9px;line-height:14px;color:#c8c8c8;transform:scaleX(0.9525);">Quick FX</span>
<span class="t" style="left:1378.53px;top:357.20px;font-size:8.9px;line-height:14px;color:#c8c8c8;transform:scaleX(0.9286);">Styles</span>
<span class="t" style="left:1408.23px;top:357.20px;font-size:8.9px;line-height:14px;color:#c8c8c8;transform:scaleX(0.9413);">Brushes</span>
<div style="position:absolute;left:1288.00px;top:376.20px;width:212.00px;height:23.10px;background:#393939;"></div>
<span class="t" style="left:1293.74px;top:381.20px;font-size:8.3px;line-height:14px;color:#7c7c7c;transform:scaleX(0.9661);">Opacity:</span>
<div style="position:absolute;left:1326.00px;top:379.30px;width:42.60px;height:15.40px;background:#333333;border-radius:2px;"></div>
<div style="position:absolute;left:1372.10px;top:379.30px;width:89.90px;height:15.40px;background:#333333;border-radius:2px;"></div>
<span class="t" style="left:1329.88px;top:380.60px;font-size:8.9px;line-height:14px;color:#9a9a9a;transform:scaleX(0.9302);">100 %</span>
<span class="t" style="left:1375.26px;top:380.80px;font-size:8.9px;line-height:14px;color:#9a9a9a;transform:scaleX(1.0442);">Normal</span>
<div style="position:absolute;left:1288.00px;top:399.30px;width:212.00px;height:280.70px;background:#292929;"></div>
<div style="position:absolute;left:1288.00px;top:398.80px;width:198.20px;height:175.60px;background:#0e0e0e;"></div>
<div style="position:absolute;left:1289.00px;top:399.80px;width:12.00px;height:28.10px;background:#343434;"></div>
<div style="position:absolute;left:1302.00px;top:399.80px;width:28.20px;height:28.10px;background:#343434;"></div>
<div style="position:absolute;left:1302.90px;top:400.70px;width:26.60px;height:26.30px;background:#2b2b2b;box-shadow:0 0 0 0.6px #3e3e3e;"></div>
<div style="position:absolute;left:1331.20px;top:399.80px;width:154.00px;height:28.10px;background:#343434;"></div>
<span class="t" style="left:1333.14px;top:407.40px;font-size:8.9px;line-height:14px;color:#c2c2c2;transform:scaleX(1.0255);">Curve</span>
<div style="position:absolute;left:1469.80px;top:410.10px;width:7.20px;height:7.20px;background:#a8a8a8;border-radius:4px;"></div>
<div style="position:absolute;left:1289.00px;top:428.90px;width:12.00px;height:28.10px;background:#343434;"></div>
<div style="position:absolute;left:1302.00px;top:428.90px;width:28.20px;height:28.10px;background:#343434;"></div>
<div style="position:absolute;left:1302.90px;top:429.80px;width:26.60px;height:26.30px;background:#2b2b2b;box-shadow:0 0 0 0.6px #3e3e3e;"></div>
<div style="position:absolute;left:1331.20px;top:428.90px;width:154.00px;height:28.10px;background:#343434;"></div>
<span class="t" style="left:1333.18px;top:436.50px;font-size:8.9px;line-height:14px;color:#c2c2c2;transform:scaleX(1.0531);">Second cut here</span>
<div style="position:absolute;left:1469.80px;top:439.20px;width:7.20px;height:7.20px;background:#a8a8a8;border-radius:4px;"></div>
<div style="position:absolute;left:1289.00px;top:458.00px;width:12.00px;height:28.10px;background:#343434;"></div>
<div style="position:absolute;left:1302.00px;top:458.00px;width:28.20px;height:28.10px;background:#343434;"></div>
<div style="position:absolute;left:1302.90px;top:458.90px;width:26.60px;height:26.30px;background:#2b2b2b;box-shadow:0 0 0 0.6px #3e3e3e;"></div>
<div style="position:absolute;left:1331.20px;top:458.00px;width:154.00px;height:28.10px;background:#343434;"></div>
<span class="t" style="left:1333.14px;top:465.60px;font-size:8.9px;line-height:14px;color:#c2c2c2;transform:scaleX(1.0255);">Curve</span>
<div style="position:absolute;left:1469.80px;top:468.30px;width:7.20px;height:7.20px;background:#a8a8a8;border-radius:4px;"></div>
<div style="position:absolute;left:1289.00px;top:487.10px;width:12.00px;height:28.10px;background:#343434;"></div>
<div style="position:absolute;left:1302.00px;top:487.10px;width:28.20px;height:28.10px;background:#343434;"></div>
<div style="position:absolute;left:1302.90px;top:488.00px;width:26.60px;height:26.30px;background:#2b2b2b;box-shadow:0 0 0 0.6px #3e3e3e;"></div>
<div style="position:absolute;left:1331.20px;top:487.10px;width:154.00px;height:28.10px;background:#343434;"></div>
<span class="t" style="left:1332.84px;top:494.70px;font-size:8.9px;line-height:14px;color:#c2c2c2;transform:scaleX(1.0615);">First cut here</span>
<div style="position:absolute;left:1469.80px;top:497.40px;width:7.20px;height:7.20px;background:#a8a8a8;border-radius:4px;"></div>
<div style="position:absolute;left:1289.00px;top:516.20px;width:12.00px;height:28.10px;background:#343434;"></div>
<div style="position:absolute;left:1302.00px;top:516.20px;width:28.20px;height:28.10px;background:#343434;"></div>
<div style="position:absolute;left:1302.90px;top:517.10px;width:26.60px;height:26.30px;background:#2b2b2b;box-shadow:0 0 0 0.6px #3e3e3e;"></div>
<div style="position:absolute;left:1331.20px;top:516.20px;width:154.00px;height:28.10px;background:#343434;"></div>
<span class="t" style="left:1333.15px;top:523.80px;font-size:8.9px;line-height:14px;color:#c2c2c2;transform:scaleX(1.0077);">Curves</span>
<div style="position:absolute;left:1469.80px;top:526.50px;width:7.20px;height:7.20px;background:#a8a8a8;border-radius:4px;"></div>
<div style="position:absolute;left:1289.00px;top:545.30px;width:12.00px;height:28.10px;background:#343434;"></div>
<div style="position:absolute;left:1302.00px;top:545.30px;width:28.20px;height:28.10px;background:#343434;"></div>
<div style="position:absolute;left:1302.90px;top:546.20px;width:26.60px;height:26.30px;background:#2b2b2b;box-shadow:0 0 0 0.6px #3e3e3e;"></div>
<div style="position:absolute;left:1331.20px;top:545.30px;width:154.00px;height:28.10px;background:#343434;"></div>
<span class="t" style="left:1333.14px;top:552.90px;font-size:8.9px;line-height:14px;color:#c2c2c2;transform:scaleX(1.0255);">Curve</span>
<div style="position:absolute;left:1469.80px;top:555.60px;width:7.20px;height:7.20px;background:#a8a8a8;border-radius:4px;"></div>
<div style="position:absolute;left:1288.00px;top:680.00px;width:212.00px;height:20.30px;background:#353535;"></div>
<div style="position:absolute;left:1291.70px;top:681.40px;width:16.50px;height:15.60px;background:#262626;border-radius:2px;"></div>
<svg width="1500" height="845" viewBox="0 0 1500 845"><rect x="1293.2" y="361" width="1" height="6.500" fill="#8c8c8c"/><rect x="1295.8" y="361" width="1" height="6.500" fill="#8c8c8c"/><rect x="1486" y="359.4" width="8.200" height="1.500" fill="#e6e6e6"/><rect x="1486" y="362.7" width="8.200" height="1.500" fill="#e6e6e6"/><rect x="1486" y="366.0" width="8.200" height="1.500" fill="#e6e6e6"/><path d="M1359.5,386.0 l2.10,2.10 l2.10,-2.10" fill="none" stroke="#8c8c8c" stroke-width="1"/><path d="M1453.5,386.0 l2.10,2.10 l2.10,-2.10" fill="none" stroke="#8c8c8c" stroke-width="1"/><circle cx="1471.200" cy="387" r="2.500" fill="none" stroke="#c8c8c8" stroke-width="1.700"/><rect x="-0.800" y="-4.300" width="1.600" height="1.700" transform="translate(1471.200,387) rotate(0)" fill="#c8c8c8"/><rect x="-0.800" y="-4.300" width="1.600" height="1.700" transform="translate(1471.200,387) rotate(45)" fill="#c8c8c8"/><rect x="-0.800" y="-4.300" width="1.600" height="1.700" transform="translate(1471.200,387) rotate(90)" fill="#c8c8c8"/><rect x="-0.800" y="-4.300" width="1.600" height="1.700" transform="translate(1471.200,387) rotate(135)" fill="#c8c8c8"/><rect x="-0.800" y="-4.300" width="1.600" height="1.700" transform="translate(1471.200,387) rotate(180)" fill="#c8c8c8"/><rect x="-0.800" y="-4.300" width="1.600" height="1.700" transform="translate(1471.200,387) rotate(225)" fill="#c8c8c8"/><rect x="-0.800" y="-4.300" width="1.600" height="1.700" transform="translate(1471.200,387) rotate(270)" fill="#c8c8c8"/><rect x="-0.800" y="-4.300" width="1.600" height="1.700" transform="translate(1471.200,387) rotate(315)" fill="#c8c8c8"/><rect x="1485.400" y="386.400" width="6.200" height="5" rx="0.6" fill="#c8c8c8"/><path d="M1486.600,386.400 v-1.500 a1.900,1.900 0 0 1 3.800,0" fill="none" stroke="#c8c8c8" stroke-width="1"/><path d="M1293,410.4 V417.8 M1297.200,410.7 Q1293.200,413.0 1293.200,414.2 Q1293.600,415.6 1297.200,417.3" fill="none" stroke="#bcbcbc" stroke-width="0.75"/><rect x="1292.400" y="409.9" width="1.200" height="1.200" fill="#bcbcbc"/><rect x="1292.400" y="417.0" width="1.200" height="1.200" fill="#bcbcbc"/><circle cx="1293.100" cy="414.1" r="1.100" fill="none" stroke="#b0b0b0" stroke-width="0.6"/><rect x="1291.700" y="439.7" width="6" height="6.800" fill="none" stroke="#b4b4b4" stroke-width="0.8"/><path d="M1293.400,441.6 h2.600 M1294.700,441.6 v3.400" stroke="#c0c0c0" stroke-width="0.8"/><path d="M1293,468.6 V476.0 M1297.200,468.9 Q1293.200,471.2 1293.200,472.4 Q1293.600,473.8 1297.200,475.5" fill="none" stroke="#bcbcbc" stroke-width="0.75"/><rect x="1292.400" y="468.1" width="1.200" height="1.200" fill="#bcbcbc"/><rect x="1292.400" y="475.2" width="1.200" height="1.200" fill="#bcbcbc"/><circle cx="1293.100" cy="472.3" r="1.100" fill="none" stroke="#b0b0b0" stroke-width="0.6"/><rect x="1291.700" y="497.9" width="6" height="6.800" fill="none" stroke="#b4b4b4" stroke-width="0.8"/><path d="M1293.400,499.8 h2.600 M1294.700,499.8 v3.400" stroke="#c0c0c0" stroke-width="0.8"/><path d="M1293,526.8 V534.2 M1297.200,527.1 Q1293.200,529.4 1293.200,530.6 Q1293.600,532.0 1297.200,533.7" fill="none" stroke="#bcbcbc" stroke-width="0.75"/><rect x="1292.400" y="526.3" width="1.200" height="1.200" fill="#bcbcbc"/><rect x="1292.400" y="533.4" width="1.200" height="1.200" fill="#bcbcbc"/><circle cx="1293.100" cy="530.5" r="1.100" fill="none" stroke="#b0b0b0" stroke-width="0.6"/><path d="M1293,555.9 V563.3 M1297.200,556.2 Q1293.200,558.5 1293.200,559.7 Q1293.600,561.1 1297.200,562.8" fill="none" stroke="#bcbcbc" stroke-width="0.75"/><rect x="1292.400" y="555.4" width="1.200" height="1.200" fill="#bcbcbc"/><rect x="1292.400" y="562.5" width="1.200" height="1.200" fill="#bcbcbc"/><circle cx="1293.100" cy="559.6" r="1.100" fill="none" stroke="#b0b0b0" stroke-width="0.6"/><path d="M1311.9,424.8C1312.5,424.6 1314.6,424.0 1315.7,423.5C1316.9,422.9 1317.8,422.2 1318.6,421.5C1319.4,420.7 1320.0,419.9 1320.4,419.0C1320.9,418.1 1321.1,417.0 1321.3,416.1C1321.4,415.2 1321.4,414.5 1321.3,413.6C1321.2,412.7 1321.0,411.8 1320.6,410.9C1320.2,410.0 1319.6,409.0 1318.9,408.1C1318.2,407.2 1317.2,406.3 1316.2,405.6C1315.2,404.9 1313.9,404.2 1313.1,403.8C1312.2,403.3 1311.4,403.0 1311.0,402.9" fill="none" stroke="#0c0c0c" stroke-width="0.75"/><path d="M1312.0,461.1C1312.3,461.5 1313.1,462.6 1313.6,463.7C1314.0,464.7 1314.5,466.0 1315.0,467.2C1315.4,468.4 1316.0,469.6 1316.4,470.8C1316.9,472.0 1317.4,473.3 1317.8,474.6C1318.1,475.9 1318.4,477.3 1318.7,478.4C1319.1,479.5 1319.6,480.6 1319.9,481.3C1320.2,482.1 1320.3,482.7 1320.4,483.0" fill="none" stroke="#0c0c0c" stroke-width="0.75"/><path d="M1304.5,533.2C1304.5,532.5 1304.8,531.2 1304.9,530.0C1305.0,528.9 1304.7,527.7 1305.2,526.6C1305.6,525.5 1306.5,524.4 1307.6,523.5C1308.6,522.6 1310.3,521.8 1311.6,521.1C1312.8,520.5 1314.0,519.9 1315.1,519.6C1316.1,519.3 1316.8,519.2 1317.8,519.3C1318.7,519.4 1319.7,519.7 1320.6,520.1C1321.6,520.5 1322.6,521.0 1323.5,521.7C1324.5,522.3 1325.7,523.2 1326.4,523.9C1327.1,524.6 1327.4,525.2 1327.6,526.0C1327.9,526.7 1327.9,527.6 1327.9,528.4C1327.9,529.2 1327.8,530.0 1327.5,530.9C1327.3,531.8 1326.9,533.0 1326.5,534.0C1326.2,534.9 1325.8,535.9 1325.4,536.6C1324.9,537.3 1324.6,537.7 1323.8,538.2C1323.0,538.7 1321.6,539.3 1320.4,539.7C1319.3,540.1 1317.8,540.4 1316.8,540.6C1315.8,540.9 1315.1,541.1 1314.3,541.2C1313.5,541.2 1313.0,541.2 1312.2,540.8C1311.3,540.5 1310.2,539.8 1309.3,539.2C1308.4,538.6 1307.4,537.8 1306.6,537.0C1305.8,536.2 1305.0,535.0 1304.7,534.3C1304.3,533.7 1304.5,534.0 1304.5,533.2Z" fill="none" stroke="#0c0c0c" stroke-width="0.75"/><path d="M1311.6,551.2C1312.8,550.9 1315.6,550.4 1317.2,550.3C1318.7,550.1 1319.9,550.2 1321.0,550.4C1322.2,550.6 1323.2,550.9 1324.0,551.4C1324.8,551.9 1325.4,552.7 1326.0,553.4C1326.5,554.2 1326.9,555.2 1327.2,556.0C1327.5,556.8 1327.8,557.8 1327.8,558.5C1327.9,559.2 1327.9,559.6 1327.7,560.3C1327.5,560.9 1327.2,561.5 1326.8,562.2C1326.4,562.9 1325.9,563.8 1325.2,564.5C1324.6,565.3 1323.8,566.0 1323.1,566.6C1322.3,567.2 1321.6,567.6 1320.8,568.0C1319.9,568.3 1318.8,568.5 1317.9,568.5C1316.9,568.5 1316.0,568.4 1315.0,568.2C1314.0,568.0 1312.8,567.7 1311.7,567.3C1310.7,567.0 1309.7,566.6 1308.9,566.2C1308.0,565.8 1307.2,565.4 1306.6,564.9C1306.0,564.4 1305.6,563.9 1305.2,563.2C1304.9,562.6 1304.8,561.8 1304.6,561.1C1304.5,560.3 1304.5,559.4 1304.5,558.6C1304.5,557.8 1304.5,557.1 1304.7,556.4C1304.9,555.7 1305.2,555.1 1305.6,554.5C1306.1,554.0 1306.7,553.5 1307.4,553.0C1308.1,552.6 1309.3,552.1 1310.0,551.8C1310.7,551.5 1310.4,551.4 1311.6,551.2Z" fill="none" stroke="#0c0c0c" stroke-width="0.75"/><path d="M1304,439.5 H1320.5" stroke="#181818" stroke-width="0.7" stroke-dasharray="1.6 0.6"/><path d="M1304,497.7 H1319.5" stroke="#181818" stroke-width="0.7" stroke-dasharray="1.6 0.6"/><rect x="1293.500" y="683.200" width="8" height="8" rx="1" fill="#262626" stroke="#b8b8b8" stroke-width="1"/><path d="M1296,692.700 v1 a1,1 0 0 0 1,1 h6.500 a1,1 0 0 0 1,-1 v-6.500 a1,1 0 0 0 -1,-1 h-1" fill="none" stroke="#8c8c8c" stroke-width="0.9"/><path d="M1294.800,691.500 v0.800 a1,1 0 0 0 1,1 h6 a1,1 0 0 0 1,-1 v-6 a1,1 0 0 0 -1,-1 h-0.800" fill="none" stroke="#b8b8b8" stroke-width="0.8"/><rect x="1370.200" y="684.400" width="11.200" height="9.600" rx="0.8" fill="#b8b8b8"/><circle cx="1375.800" cy="689.200" r="2.800" fill="#353535"/><circle cx="1391.700" cy="689.200" r="5.800" fill="none" stroke="#b8b8b8" stroke-width="0.9"/><path d="M1395.600,686 A4.600,4.600 0 0 1 1388.400,692.600 Z" fill="#b8b8b8"/><path d="M1402.600,683.500 h9.600 M1402.600,695.600 h9.600" stroke="#b8b8b8" stroke-width="0.8"/><path d="M1403.500,693.700 v-8 h3.500 M1403.500,689.600 h2.800 M1407.300,685.700 l4.500,8 M1411.800,685.700 l-4.500,8" fill="none" stroke="#b8b8b8" stroke-width="1.100"/><path d="M1418.500,693.800 L1421,684.800 Q1424,683.700 1426.600,684.800 L1428.800,693.800 Q1423.500,695.300 1418.500,693.800 Z M1423.600,684.200 L1423.700,694.700 M1421.300,684.700 L1420.900,694.500 M1426.100,684.700 L1426.500,694.500 M1419.700,689.500 Q1423.700,690.500 1427.700,689.500 M1420.400,687 Q1423.700,687.900 1427.100,687 M1419.100,691.900 Q1423.700,693 1428.300,691.900" fill="none" stroke="#b8b8b8" stroke-width="0.8"/><path d="M1453.500,683.800 h6 l2.800,2.800 v8.800 h-8.800 z" fill="none" stroke="#b8b8b8" stroke-width="0.9"/><path d="M1455.300,688.500 h5 M1455.300,690.600 h5 M1455.300,692.700 h5 M1462.300,682.300 v3 M1460.800,683.800 h3" stroke="#b8b8b8" stroke-width="0.8"/><rect x="1469" y="683.300" width="8.600" height="12.200" rx="0.6" fill="none" stroke="#b8b8b8" stroke-width="0.9"/><rect x="1470.5" y="684.9" width="1.700" height="1.700" fill="#b8b8b8"/><rect x="1474.5" y="684.9" width="1.700" height="1.700" fill="#b8b8b8"/><rect x="1472.5" y="686.9" width="1.700" height="1.700" fill="#b8b8b8"/><rect x="1470.5" y="688.9" width="1.700" height="1.700" fill="#b8b8b8"/><rect x="1474.5" y="688.9" width="1.700" height="1.700" fill="#b8b8b8"/><rect x="1472.5" y="690.9" width="1.700" height="1.700" fill="#b8b8b8"/><rect x="1470.5" y="692.9" width="1.700" height="1.700" fill="#b8b8b8"/><rect x="1474.5" y="692.9" width="1.700" height="1.700" fill="#b8b8b8"/><path d="M1485.500,686 l0.600,9.200 h6.800 l0.600,-9.200 M1484.300,685.500 h10.400 M1487.500,685.300 v-1.700 h4 v1.700 M1488,687.500 v6 M1489.500,687.500 v6 M1491,687.500 v6" fill="none" stroke="#b8b8b8" stroke-width="0.9"/></svg>
</div>
<div id="transform-panel">
<div style="position:absolute;left:1288.00px;top:700.30px;width:212.00px;height:23.70px;background:#282828;"></div>
<div style="position:absolute;left:1302.00px;top:702.00px;width:45.80px;height:22.00px;background:#383838;"></div>
<span class="t" style="left:1305.83px;top:704.80px;font-size:8.9px;line-height:14px;color:#ffffff;transform:scaleX(0.9553);">Transform</span>
<span class="t" style="left:1350.68px;top:704.80px;font-size:8.9px;line-height:14px;color:#c8c8c8;transform:scaleX(1.0109);">Navigator</span>
<span class="t" style="left:1396.38px;top:704.80px;font-size:8.9px;line-height:14px;color:#c8c8c8;transform:scaleX(1.0111);">History</span>
<div style="position:absolute;left:1288.00px;top:724.00px;width:212.00px;height:102.00px;background:#383838;"></div>
<div style="position:absolute;left:1353.10px;top:734.00px;width:51.30px;height:14.70px;background:#323232;border-radius:2px;"></div>
<span class="t" style="left:1342.68px;top:734.60px;font-size:8.9px;line-height:14px;color:#828282;transform:scaleX(0.9694);">X:</span>
<span class="t" style="left:1357.45px;top:734.60px;font-size:8.9px;line-height:14px;color:#909090;transform:scaleX(0.9856);">0 px</span>
<div style="position:absolute;left:1428.10px;top:734.00px;width:50.90px;height:14.70px;background:#323232;border-radius:2px;"></div>
<span class="t" style="left:1414.55px;top:734.60px;font-size:8.9px;line-height:14px;color:#828282;transform:scaleX(1.0194);">W:</span>
<span class="t" style="left:1432.45px;top:734.60px;font-size:8.9px;line-height:14px;color:#909090;transform:scaleX(0.9856);">0 px</span>
<div style="position:absolute;left:1353.10px;top:752.90px;width:51.30px;height:14.70px;background:#323232;border-radius:2px;"></div>
<span class="t" style="left:1343.19px;top:753.50px;font-size:8.9px;line-height:14px;color:#828282;transform:scaleX(0.9648);">Y:</span>
<span class="t" style="left:1357.45px;top:753.50px;font-size:8.9px;line-height:14px;color:#909090;transform:scaleX(0.9856);">0 px</span>
<div style="position:absolute;left:1428.10px;top:752.90px;width:50.90px;height:14.70px;background:#323232;border-radius:2px;"></div>
<span class="t" style="left:1415.82px;top:753.50px;font-size:8.9px;line-height:14px;color:#828282;transform:scaleX(1.0933);">H:</span>
<span class="t" style="left:1432.45px;top:753.50px;font-size:8.9px;line-height:14px;color:#909090;transform:scaleX(0.9856);">0 px</span>
<div style="position:absolute;left:1353.10px;top:776.20px;width:51.30px;height:15.30px;background:#323232;border-radius:2px;"></div>
<span class="t" style="left:1342.21px;top:777.00px;font-size:8.9px;line-height:14px;color:#828282;transform:scaleX(0.9703);">R:</span>
<span class="t" style="left:1357.42px;top:777.00px;font-size:8.9px;line-height:14px;color:#909090;transform:scaleX(1.0722);">0 °</span>
<div style="position:absolute;left:1428.10px;top:776.20px;width:50.90px;height:15.30px;background:#323232;border-radius:2px;"></div>
<span class="t" style="left:1418.26px;top:777.00px;font-size:8.9px;line-height:14px;color:#828282;transform:scaleX(0.8396);">S:</span>
<span class="t" style="left:1432.42px;top:777.00px;font-size:8.9px;line-height:14px;color:#909090;transform:scaleX(1.0722);">0 °</span>
<div style="position:absolute;left:1443.60px;top:798.20px;width:23.50px;height:20.00px;background:#414141;border-radius:2px;"></div>
<div style="position:absolute;left:1468.10px;top:798.20px;width:11.10px;height:20.00px;background:#414141;border-radius:2px;"></div>
<svg width="1500" height="845" viewBox="0 0 1500 845"><rect x="1293.2" y="708.3" width="1" height="6.500" fill="#8c8c8c"/><rect x="1295.8" y="708.3" width="1" height="6.500" fill="#8c8c8c"/><rect x="1486" y="706.8" width="8.200" height="1.500" fill="#e6e6e6"/><rect x="1486" y="710.1" width="8.200" height="1.500" fill="#e6e6e6"/><rect x="1486" y="713.4" width="8.200" height="1.500" fill="#e6e6e6"/><rect x="1303.300" y="753" width="24" height="24" fill="#6a6a6a"/><rect x="1301.0" y="750.7" width="4.600" height="4.600" fill="#6a6a6a"/><rect x="1301.0" y="762.7" width="4.600" height="4.600" fill="#6a6a6a"/><rect x="1301.0" y="774.7" width="4.600" height="4.600" fill="#6a6a6a"/><rect x="1313.0" y="750.7" width="4.600" height="4.600" fill="#6a6a6a"/><rect x="1313.0" y="762.7" width="4.600" height="4.600" fill="#6a6a6a"/><rect x="1313.0" y="774.7" width="4.600" height="4.600" fill="#6a6a6a"/><rect x="1325.0" y="750.7" width="4.600" height="4.600" fill="#6a6a6a"/><rect x="1325.0" y="762.7" width="4.600" height="4.600" fill="#6a6a6a"/><rect x="1325.0" y="774.7" width="4.600" height="4.600" fill="#6a6a6a"/><path d="M1395.3,783.2 l2.20,2.20 l2.20,-2.20" fill="none" stroke="#b4b4b4" stroke-width="1"/><path d="M1470.0,783.2 l2.20,2.20 l2.20,-2.20" fill="none" stroke="#b4b4b4" stroke-width="1"/><path d="M1471.3,807.0 l2.20,2.20 l2.20,-2.20" fill="none" stroke="#e8e8e8" stroke-width="1.1"/><g fill="none" stroke="#b4b4b4" stroke-width="0.8"><path d="M1488.400,748.500 V744 a1,1 0 0 1 1,-1 h2.600 a1,1 0 0 1 1,1 V748.500 M1488.400,753 V757.700 a1,1 0 0 0 1,1 h2.600 a1,1 0 0 0 1,-1 V753 M1487.500,750.800 h1.800 M1492.200,750.800 h1.800"/></g><rect x="1449.700" y="802.500" width="12" height="11.500" rx="1.200" fill="none" stroke="#6a6a6a" stroke-width="1" stroke-dasharray="4 2.500"/><rect x="1449.300" y="808" width="7" height="6.200" rx="1.500" fill="#6e6e6e"/></svg>
</div>
</div>
<div id="status">
<div style="position:absolute;left:0.00px;top:826.00px;width:1500.00px;height:19.00px;background:#333333;"></div>
<span class="t" style="left:7.87px;top:830.20px;font-size:9.3px;line-height:14px;color:#ffffff;transform:scaleX(1.0403);font-weight:bold;">Drag</span>
<span class="t" style="left:32.36px;top:830.20px;font-size:9.3px;line-height:14px;color:#c4c4c4;transform:scaleX(1.0067);">to marquee select.</span>
<span class="t" style="left:111.04px;top:830.20px;font-size:9.3px;line-height:14px;color:#ffffff;transform:scaleX(0.9560);font-weight:bold;">Click</span>
<span class="t" style="left:134.62px;top:830.20px;font-size:9.3px;line-height:14px;color:#c4c4c4;transform:scaleX(1.0234);">an object to select it.</span>
</div>
</body></html>
